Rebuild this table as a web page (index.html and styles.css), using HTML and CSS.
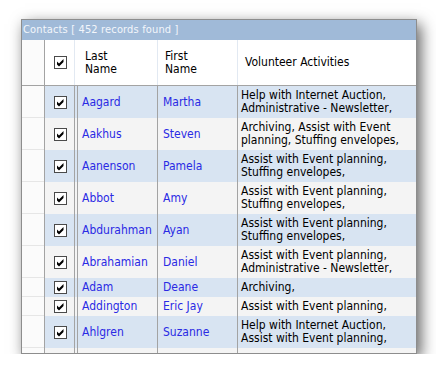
FILE: index.html
```html
<!DOCTYPE html>
<html>
<head>
<meta charset="utf-8">
<title>Contacts</title>
<link rel="stylesheet" href="styles.css">
</head>
<body>
<div class="window">
  <div class="titlebar">Contacts [ 452 records found ]</div>
  <div class="row hdr">
    <div class="cell c0"></div>
    <div class="cell c1"><svg class="cb" viewBox="0 0 13 13"><rect x=".5" y=".5" width="12" height="12" fill="#fff" stroke="#4a4a4a"/><path d="M3 5.5 5 7.5 9.5 3v3L5 10.5 3 8.5z" fill="#000"/></svg></div>
    <div class="cell c2">Last<br>Name</div>
    <div class="cell c3">First<br>Name</div>
    <div class="cell c4">Volunteer Activities</div>
  </div>
  <div class="row r blue">
    <div class="cell c0"></div>
    <div class="cell c1"><svg class="cb" viewBox="0 0 13 13"><rect x=".5" y=".5" width="12" height="12" fill="#fff" stroke="#4a4a4a"/><path d="M3 5.5 5 7.5 9.5 3v3L5 10.5 3 8.5z" fill="#000"/></svg></div>
    <div class="cell c2 name">Aagard</div>
    <div class="cell c3 name">Martha</div>
    <div class="cell c4">Help with Internet Auction,<br>Administrative - Newsletter,</div>
  </div>
  <div class="row r grey">
    <div class="cell c0"></div>
    <div class="cell c1"><svg class="cb" viewBox="0 0 13 13"><rect x=".5" y=".5" width="12" height="12" fill="#fff" stroke="#4a4a4a"/><path d="M3 5.5 5 7.5 9.5 3v3L5 10.5 3 8.5z" fill="#000"/></svg></div>
    <div class="cell c2 name">Aakhus</div>
    <div class="cell c3 name">Steven</div>
    <div class="cell c4">Archiving, Assist with Event<br>planning, Stuffing envelopes,</div>
  </div>
  <div class="row r blue">
    <div class="cell c0"></div>
    <div class="cell c1"><svg class="cb" viewBox="0 0 13 13"><rect x=".5" y=".5" width="12" height="12" fill="#fff" stroke="#4a4a4a"/><path d="M3 5.5 5 7.5 9.5 3v3L5 10.5 3 8.5z" fill="#000"/></svg></div>
    <div class="cell c2 name">Aanenson</div>
    <div class="cell c3 name">Pamela</div>
    <div class="cell c4">Assist with Event planning,<br>Stuffing envelopes,</div>
  </div>
  <div class="row r grey">
    <div class="cell c0"></div>
    <div class="cell c1"><svg class="cb" viewBox="0 0 13 13"><rect x=".5" y=".5" width="12" height="12" fill="#fff" stroke="#4a4a4a"/><path d="M3 5.5 5 7.5 9.5 3v3L5 10.5 3 8.5z" fill="#000"/></svg></div>
    <div class="cell c2 name">Abbot</div>
    <div class="cell c3 name">Amy</div>
    <div class="cell c4">Assist with Event planning,<br>Stuffing envelopes,</div>
  </div>
  <div class="row r blue">
    <div class="cell c0"></div>
    <div class="cell c1"><svg class="cb" viewBox="0 0 13 13"><rect x=".5" y=".5" width="12" height="12" fill="#fff" stroke="#4a4a4a"/><path d="M3 5.5 5 7.5 9.5 3v3L5 10.5 3 8.5z" fill="#000"/></svg></div>
    <div class="cell c2 name">Abdurahman</div>
    <div class="cell c3 name">Ayan</div>
    <div class="cell c4">Assist with Event planning,<br>Stuffing envelopes,</div>
  </div>
  <div class="row r grey">
    <div class="cell c0"></div>
    <div class="cell c1"><svg class="cb" viewBox="0 0 13 13"><rect x=".5" y=".5" width="12" height="12" fill="#fff" stroke="#4a4a4a"/><path d="M3 5.5 5 7.5 9.5 3v3L5 10.5 3 8.5z" fill="#000"/></svg></div>
    <div class="cell c2 name">Abrahamian</div>
    <div class="cell c3 name">Daniel</div>
    <div class="cell c4">Assist with Event planning,<br>Administrative - Newsletter,</div>
  </div>
  <div class="row r blue">
    <div class="cell c0"></div>
    <div class="cell c1"><svg class="cb" viewBox="0 0 13 13"><rect x=".5" y=".5" width="12" height="12" fill="#fff" stroke="#4a4a4a"/><path d="M3 5.5 5 7.5 9.5 3v3L5 10.5 3 8.5z" fill="#000"/></svg></div>
    <div class="cell c2 name">Adam</div>
    <div class="cell c3 name">Deane</div>
    <div class="cell c4">Archiving,</div>
  </div>
  <div class="row r grey">
    <div class="cell c0"></div>
    <div class="cell c1"><svg class="cb" viewBox="0 0 13 13"><rect x=".5" y=".5" width="12" height="12" fill="#fff" stroke="#4a4a4a"/><path d="M3 5.5 5 7.5 9.5 3v3L5 10.5 3 8.5z" fill="#000"/></svg></div>
    <div class="cell c2 name">Addington</div>
    <div class="cell c3 name">Eric Jay</div>
    <div class="cell c4">Assist with Event planning,</div>
  </div>
  <div class="row r blue">
    <div class="cell c0"></div>
    <div class="cell c1"><svg class="cb" viewBox="0 0 13 13"><rect x=".5" y=".5" width="12" height="12" fill="#fff" stroke="#4a4a4a"/><path d="M3 5.5 5 7.5 9.5 3v3L5 10.5 3 8.5z" fill="#000"/></svg></div>
    <div class="cell c2 name">Ahlgren</div>
    <div class="cell c3 name">Suzanne</div>
    <div class="cell c4">Help with Internet Auction,<br>Assist with Event planning,</div>
  </div>
  <div class="row r grey">
    <div class="cell c0"></div>
    <div class="cell c1"></div>
    <div class="cell c2 name"></div>
    <div class="cell c3 name"></div>
    <div class="cell c4"><br><br></div>
  </div>
</div>
</body>
</html>
```
FILE: styles.css
```css
html, body {
  margin: 0;
  background: #ffffff;
}
body {
  padding: 19px 0 0 21px;
  font-family: "DejaVu Sans Condensed", "DejaVu Sans", sans-serif;
  font-stretch: condensed;
  font-size: 12px;
  color: #000;
}
.window {
  width: 394px;
  height: 333px;
  border: 1px solid #8d8d8d;
  background: #fff;
  overflow: hidden;
  box-shadow: 4px 5px 14px rgba(0, 0, 0, 0.62);
}
.titlebar {
  height: 20px;
  line-height: 20px;
  padding-left: 1px;
  background: #a0bad8;
  color: #f3f6fb;
  font-size: 11px;
  letter-spacing: 0.15px;
  white-space: nowrap;
}
.row {
  display: grid;
  grid-template-columns: 23px 30px 83px 80px 178px;
}
.cell {
  box-sizing: border-box;
  display: flex;
  align-items: center;
  white-space: nowrap;
  overflow: hidden;
  line-height: 13px;
}
.c0 {
  border-right: 1px solid #a3a3a3;
  background: #fbfbfb;
}
.c1 {
  justify-content: center;
  padding-left: 1px;
}
.cb {
  width: 13px;
  height: 13px;
  display: block;
}
/* header */
.hdr {
  border-bottom: 1px solid #a3a3a3;
}
.hdr .cell {
  height: 45px;
}
.hdr .c1,
.hdr .c2,
.hdr .c3 {
  border-right: 1px solid #e2e9f2;
}
.hdr .c2 { padding-left: 10px; }
.hdr .c3 { padding-left: 7px; }
.hdr .c4 { padding-left: 7px; }

/* body rows */
.r .cell {
  padding-top: 3px;
  padding-bottom: 3px;
}
.r.blue { background: #d8e4f2; }
.r.grey { background: #f4f4f4; }
.r .c0 {
  background: #fbfbfb;
  box-shadow: inset 0 -1px 0 #e6e6e6;
}
.r .c1 {
  border-right: 1px solid #a3a3a3;
}
.r .c2 {
  padding-left: 7px;
  border-right: 1px solid #a3a3a3;
  background-image: linear-gradient(to right, transparent 2px, #a3a3a3 2px, #a3a3a3 3px, transparent 3px);
}
.r .c3 {
  padding-left: 5px;
  border-right: 1px solid #a3a3a3;
}
.r .c4 {
  padding-left: 3px;
}
.name {
  color: #2a2ae4;
}
```
